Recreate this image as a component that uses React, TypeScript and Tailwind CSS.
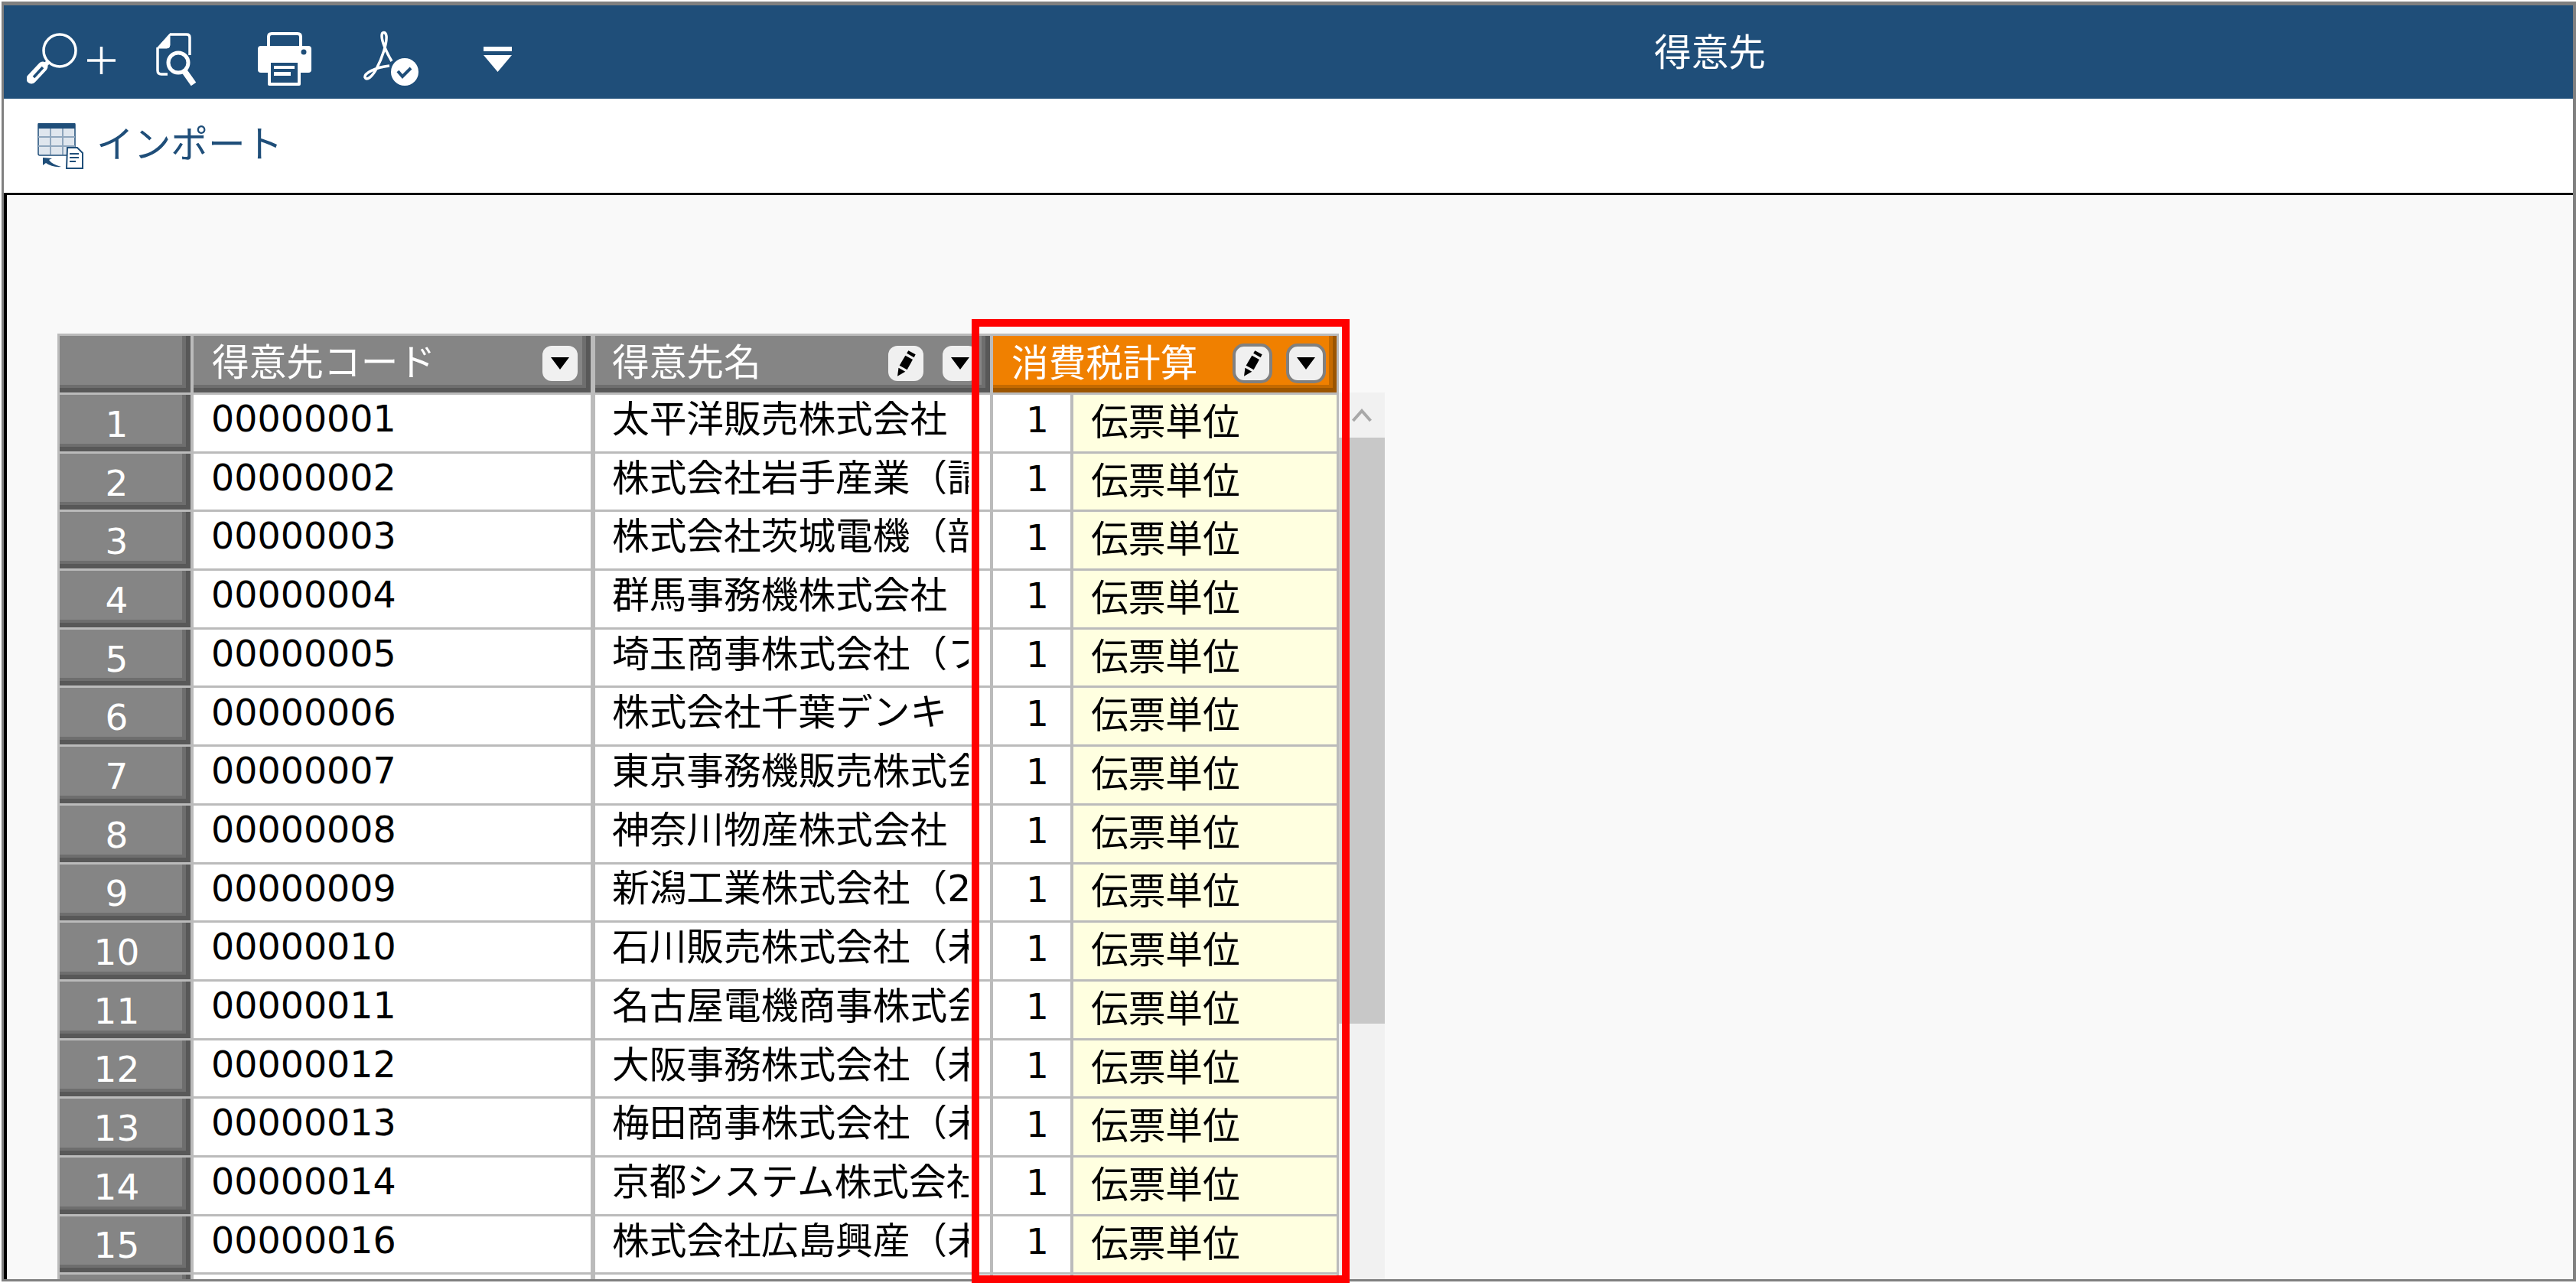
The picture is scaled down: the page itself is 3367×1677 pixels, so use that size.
const jp = "font-['Noto_Sans_CJK_JP',sans-serif]";
const latin = "font-['DejaVu_Sans','Noto_Sans_CJK_JP',sans-serif]";

const names = [
  "太平洋販売株式会社",
  "株式会社岩手産業（請求先）",
  "株式会社茨城電機（部品）",
  "群馬事務機株式会社",
  "埼玉商事株式会社（フリー）",
  "株式会社千葉デンキ",
  "東京事務機販売株式会社",
  "神奈川物産株式会社",
  "新潟工業株式会社（2020）",
  "石川販売株式会社（未使用）",
  "名古屋電機商事株式会社",
  "大阪事務株式会社（未使用）",
  "梅田商事株式会社（未使用）",
  "京都システム株式会社",
  "株式会社広島興産（未使用）",
];
const codes = ["00000001", "00000002", "00000003", "00000004", "00000005", "00000006", "00000007", "00000008", "00000009", "00000010", "00000011", "00000012", "00000013", "00000014", "00000016"];

// the header icons are drawn in page coordinates, so the viewBox is the slice of the bar they sit in
const ZoomIcon = () => (
  <svg width="116" height="122" viewBox="35 7 116 122" fill="none" stroke="#fff">
    <circle cx="78" cy="66" r="21" strokeWidth="3.5" />
    <path d="M63 81 L58 86" strokeWidth="6" />
    <path d="M41 103 L56 87" strokeWidth="13" strokeLinecap="round" />
    <path d="M44 101 L56 88" stroke="#1f4e79" strokeWidth="3.5" />
    <path d="M114 79 H151 M132.5 61 V97" strokeWidth="3.5" />
  </svg>
);

const DocSearchIcon = () => (
  <svg width="53" height="122" viewBox="204 7 53 122" fill="none" stroke="#fff">
    <path d="M206 62 V92 Q206 97 211 97 H219" strokeWidth="3.5" />
    <path d="M222 45 H244 Q248 45 248 49 V72" strokeWidth="3.5" />
    <path d="M205 63 L222 44 V59 Q222 63 218 63 Z" fill="#fff" strokeWidth="1" />
    <circle cx="233" cy="82" r="13" strokeWidth="5" />
    <path d="M241 93 L253 110" strokeWidth="8" />
  </svg>
);

const PrinterIcon = () => (
  <svg width="70" height="122" viewBox="337 7 70 122" fill="none">
    <path d="M351 60 V48 Q351 44 355 44 H389 Q393 44 393 48 V60" stroke="#fff" strokeWidth="4" />
    <rect x="337" y="60" width="70" height="35" rx="4" fill="#fff" />
    <rect x="350" y="78" width="43" height="34" rx="2" fill="#fff" />
    <rect x="354" y="82" width="35" height="26" fill="#1f4e79" />
    <rect x="358" y="86" width="27" height="4" fill="#fff" />
    <rect x="358" y="94" width="22" height="5" fill="#fff" />
    <circle cx="397" cy="68" r="3.5" fill="#1f4e79" />
  </svg>
);

const PdfIcon = () => (
  <svg width="72" height="122" viewBox="475 7 72 122" fill="none">
    <path d="M512 80 C506 70 499 55 499 47 C499 41 504 41 505 47 C506 56 500 75 492 90 C486 101 479 106 477 101 C476 96 490 88 509 86" stroke="#fff" strokeWidth="3.5" />
    <circle cx="529" cy="94" r="18" fill="#fff" />
    <path d="M520 93 L526 100 L537 89" stroke="#1f4e79" strokeWidth="4" />
  </svg>
);

const MenuIcon = () => (
  <svg width="37" height="122" viewBox="632 7 37 122" fill="#fff">
    <rect x="632" y="61" width="37" height="6" />
    <path d="M632 72 H669 L650.5 94 Z" />
  </svg>
);

const ImportIcon = () => (
  <svg width="60" height="60" viewBox="49 160 60 60" fill="none">
    <rect x="50" y="160" width="48" height="42" rx="2" fill="#dfe6ee" stroke="#1f4e79" strokeWidth="1.5" />
    <rect x="50" y="160" width="48" height="7" fill="#1f4e79" />
    <path d="M66 167 V201 M82 167 V201 M50 178 H98 M50 190 H98" stroke="#8fa6bd" strokeWidth="2" />
    <path d="M88 192 H101 L108 199 V219 H87 Z" fill="#fff" stroke="#1f4e79" strokeWidth="2" />
    <path d="M91 200 H103 M91 205 H103 M91 210 H99" stroke="#1f4e79" strokeWidth="2" />
    <path d="M56 205 L56 215 L60 212 Q68 218 80 217 Q68 214 64 208 L68 206 Z" fill="#1f4e79" />
  </svg>
);

const PencilIcon = () => (
  <svg viewBox="0 0 24 24" className="size-[40px]" fill="#000">
    <path d="M7 13.6 L13 17 L17.4 9 L11.6 5.8 Z" />
    <path d="M12.7 4 L18.4 7.3 L19.6 5 L14 2 Z" />
    <path d="M6.3 15.4 L11.6 18.4 L5.4 22 Z" />
  </svg>
);

const ArrowIcon = () => (
  <svg width="24" height="16" viewBox="0 0 24 16" fill="#000">
    <path d="M0 0 H24 L12 16 Z" />
  </svg>
);

const HeadButton = ({ orange, children }: { orange?: boolean; children: React.ReactNode }) => (
  <div
    className={
      orange
        ? "flex size-[52px] items-center justify-center rounded-[15px] border-[4px] border-[#808080] bg-[#f0f0f0]"
        : "flex size-[46px] items-center justify-center rounded-[12px] bg-[#f0f0f0]"
    }
  >
    {children}
  </div>
);

const grayBevel = "bg-[#858585] shadow-[inset_-6px_-6px_0_#585858,inset_-11px_-10px_0_#6e6e6e]";

const HeaderRow = () => (
  <div className={`flex h-[74px] shrink-0 text-[48.7px] leading-none text-white ${jp}`}>
    <div className={`w-[171px] ${grayBevel}`} />
    <div className={`ml-[4px] flex w-[519px] items-center justify-between pr-[17px] pl-[24px] pb-[3px] ${grayBevel}`}>
      <span className="pb-[8px]">得意先コード</span>
      <HeadButton>
        <ArrowIcon />
      </HeadButton>
    </div>
    <div className={`ml-[6px] flex w-[516px] items-center justify-between pr-[16px] pl-[22px] pb-[3px] ${grayBevel}`}>
      <span className="pb-[8px]">得意先名</span>
      <div className="flex gap-[25px]">
        <HeadButton>
          <PencilIcon />
        </HeadButton>
        <HeadButton>
          <ArrowIcon />
        </HeadButton>
      </div>
    </div>
    <div className="ml-[4px] flex w-[449px] items-center justify-between bg-[#f08000] pr-[14px] pl-[24px] pb-[2px] shadow-[inset_-5px_-6px_0_#9c5500,inset_-10px_-10px_0_#c46a00]">
      <span className="pb-[8px]">消費税計算</span>
      <div className="flex gap-[18px]">
        <HeadButton orange>
          <PencilIcon />
        </HeadButton>
        <HeadButton orange>
          <ArrowIcon />
        </HeadButton>
      </div>
    </div>
  </div>
);

const DataRow = ({ no, code, name }: { no: number; code?: string; name?: string }) => (
  <div className="flex h-[73.7px] shrink-0 text-black">
    <div className={`flex w-[171px] items-center justify-center pt-[3px] pr-[22px] text-[47px] leading-none text-white ${latin} ${grayBevel}`}>
      {code && no}
    </div>
    <div className={`ml-[4px] flex w-[519px] items-center bg-white pl-[23px] pb-[10px] text-[47.5px] leading-none ${latin}`}>{code}</div>
    <div className={`ml-[6px] flex w-[516px] items-center bg-white pl-[22px] pb-[9px] text-[48.7px] leading-none ${latin}`}>
      <div className="w-[466px] overflow-hidden whitespace-nowrap">{name}</div>
    </div>
    <div className={`ml-[4px] flex w-[101px] items-center justify-end bg-white pr-[28px] pb-[8px] text-[47px] leading-none ${latin}`}>{code && 1}</div>
    <div className={`ml-[4px] flex w-[344px] items-center bg-[#ffffe0] pl-[23px] pb-[9px] text-[48.7px] leading-none ${jp}`}>{code && "伝票単位"}</div>
  </div>
);

export default function App() {
  return (
    <div className="relative h-[1677px] w-[3367px] overflow-hidden bg-white pt-[2px] pl-[2px]">
      <div className="flex h-[1673px] w-[3365px] flex-col border-[3px] border-t-[5px] border-r-[4px] border-[#808080]">
        <div className="flex h-[122px] shrink-0 bg-[#1f4e79] pl-[30px]">
          <ZoomIcon />
          <div className="ml-[53px]">
            <DocSearchIcon />
          </div>
          <div className="ml-[80px]">
            <PrinterIcon />
          </div>
          <div className="ml-[68px]">
            <PdfIcon />
          </div>
          <div className="ml-[85px]">
            <MenuIcon />
          </div>
          <div className={`ml-[1493px] flex items-center pb-[6px] text-[48.7px] leading-none text-white ${jp}`}>得意先</div>
        </div>

        <div className={`flex h-[123px] shrink-0 items-center bg-white pl-[44px] text-[48.7px] leading-none text-[#1f4e79] ${jp}`}>
          <ImportIcon />
          <span className="ml-[17px] pb-[10px]">インポート</span>
        </div>

        <div className="flex min-h-0 flex-1 overflow-hidden border-t-[3px] border-l-[4px] border-black bg-[#f9f9f9] pt-[181px] pl-[66px]">
          <div className="flex w-[1675px] shrink-0 flex-col gap-[3px] bg-[#bbbbbb] px-[3px] pt-[3px]">
            <HeaderRow />
            {codes.map((code, i) => (
              <DataRow key={code} no={i + 1} code={code} name={names[i]} />
            ))}
            <DataRow no={16} />
          </div>
          <div className="mt-[77px] flex w-[60px] shrink-0 flex-col bg-[#f1f1f1]">
            <div className="flex h-[59px] items-center justify-center">
              <svg width="26" height="18" viewBox="0 0 26 18" fill="none" stroke="#a8a8a8" strokeWidth="4">
                <path d="M1.5 16 L13 3 L24.5 16" />
              </svg>
            </div>
            <div className="h-[766px] bg-[#c8c8c8]" />
          </div>
        </div>
      </div>
      <div className="absolute top-[417px] left-[1270px] h-[1260px] w-[494px] border-[10px] border-[#ff0000]" />
    </div>
  );
}
